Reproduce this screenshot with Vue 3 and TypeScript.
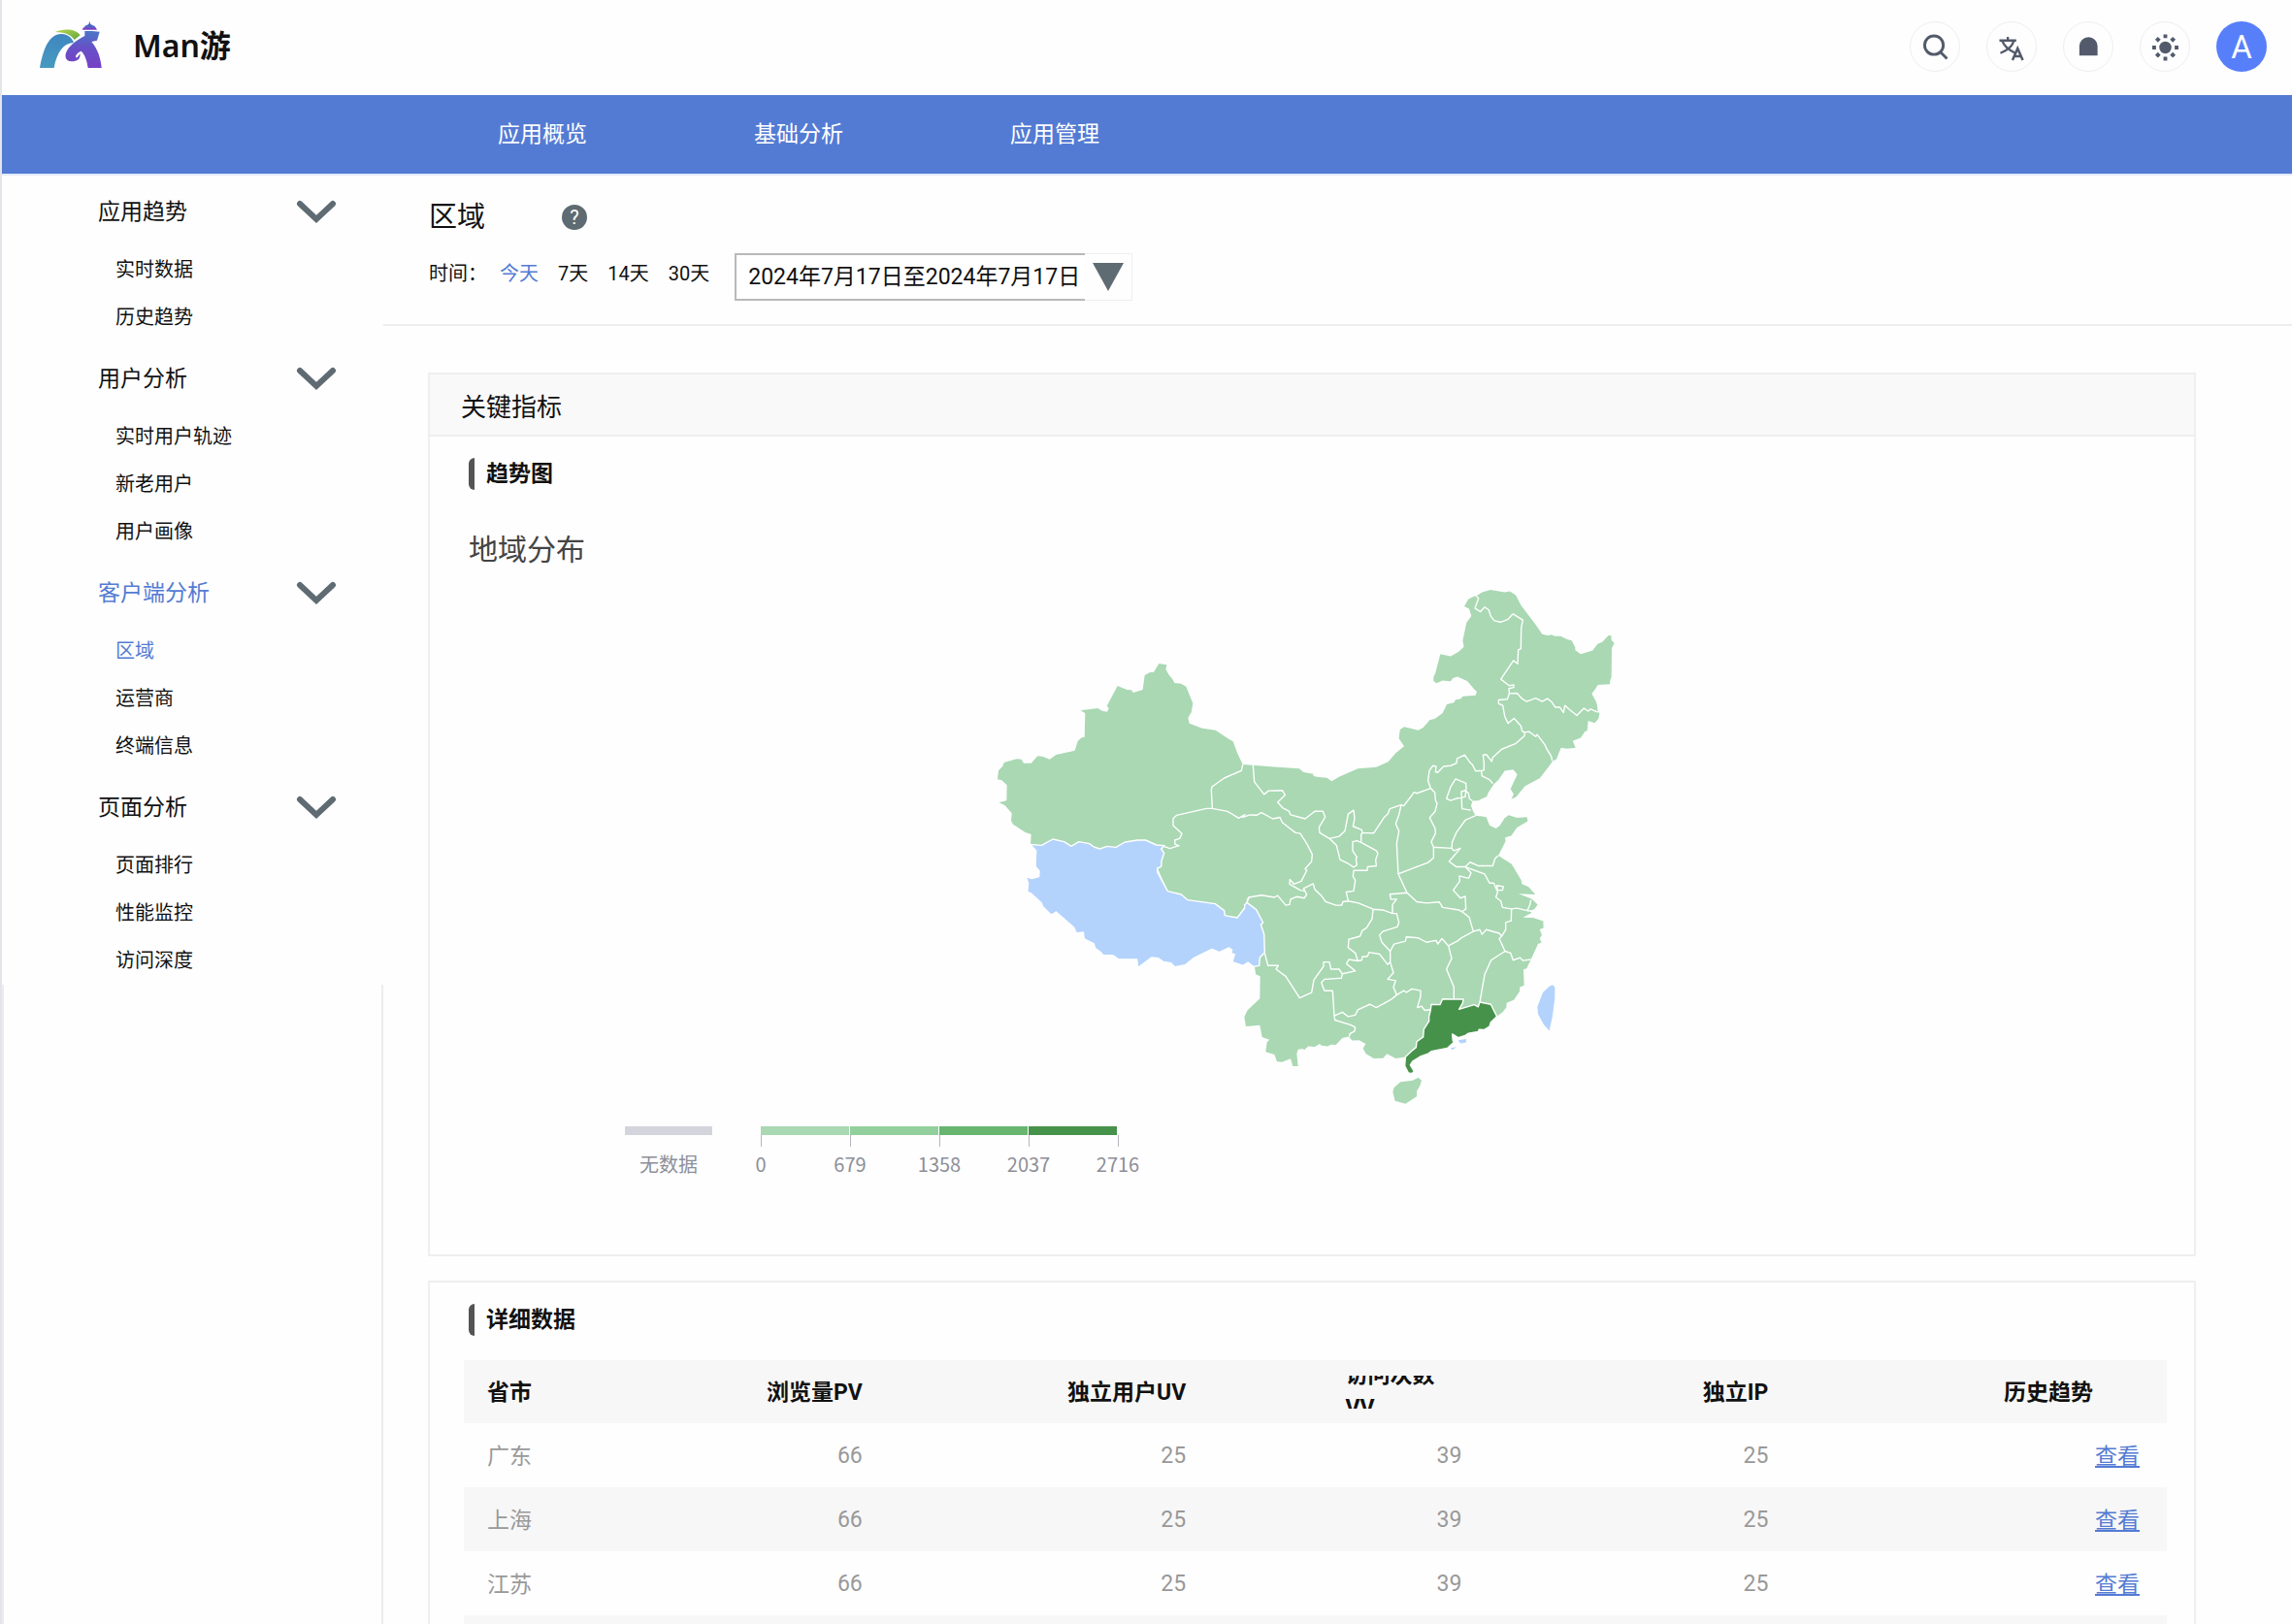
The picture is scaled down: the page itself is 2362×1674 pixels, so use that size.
<script setup lang="ts">
interface MenuGroup {
  title: string
  active?: boolean
  items: string[]
}

interface Row {
  region: string
  pv: number
  uv: number
  vv: number
  ip: number
}

const navItems: string[] = ['应用概览', '基础分析', '应用管理']

const menu: MenuGroup[] = [
  { title: '应用趋势', items: ['实时数据', '历史趋势'] },
  { title: '用户分析', items: ['实时用户轨迹', '新老用户', '用户画像'] },
  { title: '客户端分析', active: true, items: ['区域', '运营商', '终端信息'] },
  { title: '页面分析', items: ['页面排行', '性能监控', '访问深度'] },
]
const currentItem = '区域'

const ranges: string[] = ['今天', '7天', '14天', '30天']
const currentRange = '今天'

const legend = [
  { color: '#a9d8b3', from: '0' },
  { color: '#93cf9c', from: '679' },
  { color: '#67b56f', from: '1358' },
  { color: '#47924b', from: '2037' },
]

const rows: Row[] = ['广东', '上海', '江苏'].map((region) => ({ region, pv: 66, uv: 25, vv: 39, ip: 25 }))

// Land outline, western half
const westLand =
  'M782,381 765,345 752,310 735,300 698,275 657,269 617,254 613,237 623,220 628,192 607,140 592,131 571,129 565,117 553,103 544,86 547,73 523,69 507,95 494,97 479,105 473,150 443,159 438,151 424,150 395,138 362,200 368,207 363,218 347,215 334,207 281,214 295,223 293,296 284,298 272,309 263,338 205,351 185,365 165,357 148,355 128,377 105,377 98,365 83,364 44,375 40,386 27,400 24,427 37,430 53,445 52,492 45,495 28,498 47,508 68,532 66,555 72,566 110,591 128,597 126,628 200,640 530,650 520,705 550,773 612,800 697,812 725,848 765,855 795,810 840,870 844,962 833,978 833,1003 819,1006 822,1030 836,1036 835,1105 797,1141 787,1162 792,1191 835,1187 842,1224 865,1232 857,1240 853,1270 880,1278 888,1300 904,1301 930,1291 937,1314 953,1314 949,1275 953,1262 972,1260 985,1249 1000,1253 1000,410 970,405 957,394 890,389Z'

// Land outline, eastern half
const eastLand =
  'M190,582 230,594 262,597 277,606 300,594 358,571 415,567 452,552 475,528 501,509 485,487 488,463 501,455 545,464 560,457 580,436 597,432 620,416 633,392 655,387 660,379 675,377 683,370 722,367 726,357 718,350 696,327 666,315 652,319 645,328 620,326 601,333 592,327 592,316 598,304 613,252 645,258 670,245 686,231 682,215 694,164 709,146 702,126 687,119 700,99 717,91 724,90 742,80 768,73 812,80 828,77 846,88 863,117 908,170 928,197 945,200 958,198 965,202 985,202 1005,211 1019,214 1030,233 1030,241 1047,252 1084,242 1099,224 1113,219 1133,200 1141,200 1142,213 1151,222 1143,235 1142,316 1138,325 1137,336 1100,338 1090,352 1081,362 1094,384 1098,395 1100,413 1105,417 1102,432 1090,444 1070,438 1067,466 1060,468 1047,485 1022,494 1031,513 1005,516 986,513 972,545 960,551 947,567 920,598 875,620 847,650 832,656 840,643 830,628 851,587 838,574 812,577 793,602 778,615 760,640 757,649 730,660 712,661 708,675 714,690 722,702 755,706 765,729 785,738 797,730 812,709 824,701 850,708 881,706 883,718 850,735 832,758 813,763 815,773 792,814 833,837 863,882 865,893 885,900 907,922 855,920 895,934 914,950 903,963 890,967 895,973 885,978 868,986 900,987 931,996 932,1015 920,1019 927,1035 920,1045 926,1056 915,1060 893,1103 880,1128 870,1131 872,1175 859,1180 858,1192 840,1216 818,1224 817,1237 805,1250 787,1262 730,1270 600,1320 505,1375 475,1379 448,1366 436,1378 407,1379 383,1366 374,1351 382,1338 362,1328 340,1329 330,1318 310,1322 290,1341 275,1340 265,1345 245,1343 240,1338 225,1346 205,1345 192,1355 190,1355Z'

const tibet =
  'M126,628 160,631 195,612 230,620 252,634 275,620 308,626 322,636 340,642 362,634 390,637 418,621 457,615 482,615 515,630 540,632 530,642 539,655 531,680 530,697 518,702 519,715 550,773 592,783 612,800 697,812 725,833 727,848 765,855 788,825 788,815 795,808 824,830 845,870 838,877 848,905 850,962 835,978 833,1003 815,1006 798,993 783,1003 750,992 757,968 745,965 749,955 740,948 710,962 687,952 632,979 605,1001 572,1007 560,995 537,991 520,980 500,978 458,1010 455,984 397,983 382,972 350,970 343,962 326,950 322,936 292,921 289,900 268,903 260,885 205,837 190,847 163,820 160,810 128,780 116,775 119,750 112,728 130,734 152,728 153,710 141,697 143,648Z'

const guangdong =
  'M583,1243 585,1228 612,1229 620,1213 655,1214 684,1214 682,1224 671,1242 718,1229 730,1235 735,1222 769,1228 788,1262 769,1278 765,1290 748,1299 733,1298 730,1304 700,1309 690,1315 668,1321 650,1311 652,1330 656,1333 635,1350 585,1359 575,1366 550,1374 527,1387 520,1397 532,1415 525,1421 514,1419 503,1400 505,1375 527,1356 538,1348 540,1332 560,1319 562,1297 578,1275 578,1262Z'

const hainan = 'M466,1472 470,1460 490,1444 527,1440 545,1432 555,1440 550,1455 540,1470 540,1485 505,1505 473,1497Z'

const islands =
  'M950,1178 960,1174 967,1180 967,1210 960,1260 950,1302 933,1285 915,1255 913,1235 930,1195Z M668,1328 693,1325 692,1335 675,1337Z M645,1350 663,1347 650,1355Z'

const westBorders =
  'M782,381 778,400 725,423 687,450 685,460 688,517 M790,535 770,547 735,526 688,517 670,517 578,538 567,548 567,570 594,595 587,610 572,615 573,628 585,632 557,641 540,635 M795,808 802,792'

const eastBorders = [
  'M724,90 731,97 720,124 737,134 750,121 763,129 768,145 780,159 800,163 822,155 838,140 868,157 863,180 862,237 854,240 852,279 839,270 800,322 826,340 840,338 840,345 825,348 826,362',
  'M826,362 850,361 865,376 880,384 908,375 928,384 944,376 958,386 968,400 982,400 994,415 998,395 1010,405 1035,423 1057,403 1070,411 1077,405 1100,414',
  'M826,362 820,378 793,380 793,390 806,395 812,425 822,445 841,431 862,452 866,467 874,470',
  'M874,470 887,468 908,482 912,476 935,503 943,518 956,537 959,550',
  'M874,470 873,480 845,502 803,517 775,540 772,551 755,532 745,533 748,555 748,575 740,578 742,592 765,602 775,613',
  'M742,577 722,578 712,560 703,552 688,533 665,543 663,556 645,563 623,565 605,582 598,580 600,565 590,563 579,577 575,605 583,626',
  'M583,626 596,638 598,660 603,668 597,690 580,708 597,738 598,752 585,775 592,790',
  'M583,626 540,640 532,637 517,655 500,675 492,672 485,700 475,725 485,745 478,780 483,865',
  'M492,672 457,683 450,698 440,706 407,751 372,750',
  'M372,750 370,742 343,732 348,710 345,687 328,698 318,745 300,760 270,766 292,785 303,825 328,836 345,846 355,840 352,823 355,818 342,800 342,775 355,772 368,777 368,755 372,750',
  'M368,777 415,800 420,808 413,825 415,842 388,845 387,855 345,855 343,872 350,882 345,912 322,915 328,940',
  'M34,562 38,608 68,643 82,633 125,632 133,645 110,665 125,680 145,690 150,700 195,711 225,690 250,690 257,706 238,735 240,750 270,766',
  'M0,707 25,700 45,701 60,694 95,711 117,707 125,722 165,750 180,752 200,780 217,810 215,830 195,850 200,855 183,885 160,893 148,880 147,893 180,910 192,912',
  'M15,940 20,930 60,924 100,930 110,925 135,952 147,950 150,935 170,928 192,932 200,922 190,905 220,892 225,908 245,925 258,942 290,952 308,952 312,942 328,940',
  'M328,940 360,946 405,963 435,965 465,975 478,975 485,1000 480,1012 435,1025 425,1035 432,1055 458,1080',
  'M405,963 402,990 385,1015 372,1022 365,1038 330,1047 328,1070 350,1085 358,1107',
  'M358,1107 330,1103 323,1115 350,1135 310,1143 300,1130 275,1130 270,1110 252,1110 252,1122 222,1160 215,1195 178,1210 135,1150 105,1130 112,1120 80,1120 70,1085',
  'M358,1107 370,1105 372,1095 387,1095 393,1083 425,1088 450,1117 458,1110 458,1080',
  'M310,1143 307,1155 255,1158 245,1168 255,1190 280,1190 285,1260',
  'M285,1260 310,1250 328,1262 350,1258 358,1243 395,1228 415,1237 460,1215 478,1202',
  'M458,1110 468,1140 450,1158 475,1162 468,1180 478,1202 500,1190 508,1195 525,1185 552,1190 552,1205 542,1237 555,1233 565,1245 583,1243',
  'M285,1260 287,1272 335,1285 350,1292 348,1303 333,1310 332,1318',
  'M483,865 510,917 457,921 460,935 478,935 465,950 465,975',
  'M483,865 525,850 575,833 592,820 592,790 648,793 655,800 675,793 640,830 663,845 690,845',
  'M648,793 650,775 662,750 690,715 722,702',
  'M510,917 540,942 570,946 610,943 620,958 670,965 680,970',
  'M690,845 708,862 700,877 672,870 673,885 653,910 675,932 690,927 692,962 680,970 702,985 715,1025',
  'M690,845 705,832 730,842 775,842 782,822 792,814',
  'M690,845 750,865 765,890 778,890 788,910 805,910 808,900 788,897 790,915 785,930 800,940 805,958 833,962 850,960 882,967 890,950 893,937 M882,967 893,968',
  'M833,962 832,995 815,1000 815,1020 803,1038',
  'M638,1065 665,1052 680,1042 715,1025 735,1020 742,1033 755,1020 795,1030 803,1038 795,1045 813,1080 770,1105 750,1145 735,1222',
  'M458,1080 470,1060 505,1052 508,1040 545,1043 570,1055 600,1050 605,1060 618,1045 638,1065 648,1100 632,1130 655,1180 655,1212',
  'M813,1080 830,1085 838,1105 860,1098 868,1106 893,1103',
  'M632,655 645,622 660,600 692,612 693,625 690,650 660,655 645,660Z',
  'M676,636 690,632 700,640 703,655 712,661 M678,635 680,683 708,687',
].join(' ')
</script>

<template>
  <div class="app">
    <header class="topbar">
      <svg class="logo" viewBox="120 62 198 150" aria-hidden="true">
        <defs>
          <linearGradient id="peak" x1="0" y1="0" x2="0" y2="1">
            <stop offset="0" stop-color="#3f86c0" />
            <stop offset="1" stop-color="#479abf" />
          </linearGradient>
          <linearGradient id="leaf" x1="0" y1="0" x2="1" y2="1">
            <stop offset="0" stop-color="#b9d84e" />
            <stop offset="1" stop-color="#5fa63f" />
          </linearGradient>
          <linearGradient id="wall" x1="0" y1="0" x2="0" y2="1">
            <stop offset="0" stop-color="#4a77c6" />
            <stop offset="0.45" stop-color="#6750c8" />
            <stop offset="1" stop-color="#7640c6" />
          </linearGradient>
        </defs>
        <path fill="url(#peak)" d="M123 209C132 160 148 104 190 104c20 0 34 14 38 27-30 0-52 28-61 78z" />
        <path fill="url(#leaf)" d="M170 98c26-12 66-10 78 10l-18 14c-12-18-33-23-60-24z" />
        <path
          fill="url(#wall)"
          d="M262 95h22l24 2-8 27-17 4c18 20 29 52 31 81h-42c-3-22-9-40-21-52-10 4-20 13-16 20 4 2 8-5 12-13 3 17-8 25-26 25-20 0-23-20-13-35 11-17 27-30 54-44z"
        />
        <path fill="#4a66c0" d="M277 65l3 9 14 7h-34l14-7zM262 81h32v4h-32z" />
        <path fill="#7640c6" d="M258 84h38l4 7h-46z" />
      </svg>
      <h1 class="brand">Man游</h1>
      <div class="tools">
        <button class="tool" type="button" aria-label="搜索">
          <svg viewBox="0 0 52 52">
            <circle cx="25" cy="24.500" r="10" fill="none" stroke="#525a6b" stroke-width="3" />
            <path d="M32 32l7 7" stroke="#525a6b" stroke-width="3" />
          </svg>
        </button>
        <button class="tool" type="button" aria-label="语言">
          <svg viewBox="0 0 52 52" fill="none" stroke="#525a6b" stroke-width="2.400">
            <path d="M13 19.500h18M22 15.500v4M16 20c2 6 7 10 15 13.500M28.500 20c-2 6-6 10-14.500 13" />
            <path d="M27 40.500L32.500 28l5.500 12.500M29 36.500h7.500" stroke-width="2.600" />
          </svg>
        </button>
        <button class="tool" type="button" aria-label="通知">
          <svg viewBox="0 0 52 52">
            <path d="M16.500 35.500V25.500a9.500 9.500 0 0 1 19.500 0V35.500z" fill="#525a6b" />
          </svg>
        </button>
        <button class="tool" type="button" aria-label="主题">
          <svg viewBox="0 0 52 52" fill="#525a6b">
            <circle cx="26.500" cy="27" r="6.500" />
            <path
              d="M24.500 13h4v4h-4zM24.500 37h4v4h-4zM12.500 25h4v4h-4zM36.500 25h4v4h-4zM18.500 15.500l3 3-3 3-3-3zM34.500 15.500l3 3-3 3-3-3zM18.500 32l3 3-3 3-3-3zM34.500 32l3 3-3 3-3-3z"
            />
          </svg>
        </button>
        <button class="avatar" type="button">A</button>
      </div>
    </header>

    <nav class="nav">
      <a v-for="item in navItems" :key="item" href="#">{{ item }}</a>
    </nav>

    <div class="body">
      <aside class="side">
        <section v-for="group in menu" :key="group.title" class="group">
          <button type="button" class="group-title" :class="{ active: group.active }">
            <span>{{ group.title }}</span>
            <svg class="chevron" viewBox="0 0 42 26" aria-hidden="true">
              <path d="M4 5l17 16L38 5" fill="none" stroke="#5f6b72" stroke-width="6" stroke-linecap="round" />
            </svg>
          </button>
          <a
            v-for="item in group.items"
            :key="item"
            href="#"
            class="item"
            :class="{ active: item === currentItem }"
            >{{ item }}</a
          >
        </section>
        <div class="side-rest"></div>
      </aside>

      <main class="main">
        <div class="page-head">
          <div class="page-title">
            <h2>区域</h2>
            <button type="button" class="help" aria-label="帮助">?</button>
          </div>
          <div class="filters">
            <label class="time-label" for="period">时间：</label>
            <div class="ranges">
              <a v-for="r in ranges" :key="r" href="#" :class="{ active: r === currentRange }">{{ r }}</a>
            </div>
            <div class="picker">
              <select id="period">
                <option>2024年7月17日至2024年7月17日</option>
              </select>
              <span class="arrow">
                <svg viewBox="0 0 32 29" aria-hidden="true"><path d="M0 0h32L16 29z" fill="#5f6b72" /></svg>
              </span>
            </div>
          </div>
        </div>

        <section class="card">
          <h3 class="card-head">关键指标</h3>
          <div class="card-body">
            <h4 class="section-title">趋势图</h4>
            <p class="chart-title">地域分布</p>
            <svg class="map" viewBox="2 0 660 580" role="img" aria-label="地域分布">
              <g transform="translate(0 80) scale(0.33333)">
                <path class="land" :d="westLand" />
              </g>
              <g transform="translate(260 0) scale(0.33333 0.3699)">
                <path class="land" :d="eastLand" />
                <path class="land" :d="hainan" />
                <path class="nodata" :d="islands" />
                <path class="border" :d="eastBorders" />
                <path class="top" :d="guangdong" />
              </g>
              <g transform="translate(0 80) scale(0.33333)">
                <path class="nodata edge" :d="tibet" />
                <path class="border" :d="westBorders" />
              </g>
            </svg>
            <div class="legend">
              <div class="none">
                <i></i>
                <span>无数据</span>
              </div>
              <div class="scale">
                <div v-for="step in legend" :key="step.from" class="step">
                  <i :style="{ background: step.color }"></i>
                  <span>{{ step.from }}</span>
                </div>
                <div class="step end"><span>2716</span></div>
              </div>
            </div>
          </div>
        </section>

        <section class="card detail">
          <h4 class="section-title">详细数据</h4>
          <table>
            <colgroup>
              <col class="c-region" />
              <col class="c-pv" />
              <col class="c-uv" />
              <col class="c-vv" />
              <col class="c-ip" />
              <col />
            </colgroup>
            <thead>
              <tr>
                <th scope="col">省市</th>
                <th scope="col">浏览量PV</th>
                <th scope="col">独立用户UV</th>
                <th scope="col" class="visits">
                  <div class="clip"><span>访问次数<br />VV</span></div>
                </th>
                <th scope="col">独立IP</th>
                <th scope="col" class="trend">历史趋势</th>
              </tr>
            </thead>
            <tbody>
              <tr v-for="row in rows" :key="row.region">
                <td>{{ row.region }}</td>
                <td>{{ row.pv }}</td>
                <td>{{ row.uv }}</td>
                <td>{{ row.vv }}</td>
                <td>{{ row.ip }}</td>
                <td><a href="#">查看</a></td>
              </tr>
              <tr>
                <td colspan="6"></td>
              </tr>
            </tbody>
          </table>
        </section>
      </main>
    </div>
  </div>
</template>

<style>
body {
  margin: 0;
  background: #fefefe;
}
</style>

<style scoped>
.app {
  box-sizing: border-box;
  height: 100vh;
  overflow: hidden;
  display: flex;
  flex-direction: column;
  border-left: 2px solid #e4e4ea;
  color: #111;
  font-family: Roboto, 'Noto Sans CJK SC', sans-serif;
  font-size: 23px;
}
h1,
h2,
h3,
h4,
p {
  margin: 0;
  font-weight: 400;
}
a {
  color: inherit;
  text-decoration: none;
}
button {
  padding: 0;
  border: 0;
  background: none;
  color: inherit;
  font: inherit;
}

.topbar {
  flex: none;
  display: flex;
  align-items: center;
  height: 98px;
  padding: 0 26px 0 38px;
}
.logo {
  width: 66px;
  height: 50px;
  margin-bottom: 6px;
}
.brand {
  margin-left: 31px;
  margin-bottom: 8px;
  font-family: 'Noto Sans', 'Noto Sans CJK SC', sans-serif;
  font-size: 32px;
  font-weight: 600;
}
.tools {
  display: flex;
  gap: 27px;
  margin-left: auto;
  margin-bottom: 2px;
}
.tool {
  box-sizing: border-box;
  width: 52px;
  height: 52px;
  border: 1px solid #efeff3;
  border-radius: 50%;
}
.tool svg {
  display: block;
  width: 50px;
  height: 50px;
}
.avatar {
  width: 52px;
  height: 52px;
  border-radius: 50%;
  background: #587ffa;
  color: #fff;
  font-size: 33px;
}

.nav {
  flex: none;
  display: flex;
  gap: 172px;
  padding-left: 511px;
  background: #547bd3;
  color: #fff;
  line-height: 81px;
  border-bottom: 2px solid #e4ebf9;
}

.body {
  flex: 1;
  min-height: 0;
  display: flex;
}
.side {
  flex: none;
  display: flex;
  flex-direction: column;
  width: 393px;
  padding-top: 1px;
}
.side-rest {
  flex: 1;
  box-sizing: border-box;
  border: solid #ececf0;
  border-width: 0 2px;
}
.group {
  display: flex;
  flex-direction: column;
  padding-bottom: 2px;
}
.group:last-of-type {
  padding-bottom: 0;
}
.group-title {
  display: flex;
  align-items: center;
  justify-content: space-between;
  height: 72px;
  padding: 0 48px 0 99px;
  text-align: left;
}
.group-title span {
  padding-bottom: 5px;
}
.chevron {
  width: 42px;
  height: 26px;
}
.item {
  padding-left: 117px;
  font-size: 20px;
  line-height: 49px;
}
.active {
  color: #547bd3;
}

.main {
  flex: 1;
  min-width: 0;
}
.page-head {
  padding: 23px 0 24px 47px;
  border-bottom: 2px solid #eee;
}
.page-title {
  display: flex;
  align-items: center;
  height: 40px;
}
.page-title h2 {
  padding-bottom: 6px;
  font-size: 29px;
}
.help {
  width: 26px;
  height: 26px;
  margin-left: 79px;
  border-radius: 50%;
  background: #5f6b72;
  color: #fff;
  font-size: 20px;
  line-height: 26px;
}
.filters {
  display: flex;
  margin-top: 17px;
  font-size: 20px;
  line-height: 43px;
}
.time-label {
  width: 73px;
}
.ranges {
  display: flex;
  gap: 20px;
}
.picker {
  display: flex;
  margin-left: 26px;
}
.picker select {
  box-sizing: border-box;
  width: 361px;
  height: 49px;
  padding: 0 0 0 12px;
  border: 2px solid #b9b9b9;
  border-right: 0;
  border-radius: 0;
  appearance: none;
  background: #fff;
  color: #111;
  font: inherit;
  font-size: 23px;
}
.arrow {
  display: flex;
  align-items: center;
  justify-content: center;
  width: 48px;
  border: 1px solid #eee;
  border-left: 0;
}
.arrow svg {
  width: 32px;
  height: 29px;
}

.card {
  margin: 48px 99px 0 46px;
  border: 2px solid #efefef;
}
.card-head {
  padding: 6px 0 0 32px;
  border-bottom: 2px solid #efefef;
  background: #f9f9f9;
  font-size: 26px;
  line-height: 56px;
}
.card-body {
  display: flex;
  flex-direction: column;
  padding: 22px 40px 71px;
}
.section-title {
  display: flex;
  align-items: flex-start;
  gap: 12px;
  height: 33px;
  font-weight: 700;
  line-height: 33px;
}
.section-title::before {
  content: '';
  width: 6px;
  height: 33px;
  border-radius: 6px 0 0 6px;
  background: #545454;
}
.chart-title {
  margin-top: 48px;
  color: #444;
  font-size: 30px;
  line-height: 28px;
}
.map {
  align-self: center;
  width: 660px;
  height: 580px;
}
.land {
  fill: #a9d8b3;
}
.nodata {
  fill: #b3d3fc;
}
.top {
  fill: #47924b;
}
.border,
.edge,
.top {
  stroke: #fff;
  stroke-width: 1.4;
  stroke-linejoin: round;
  vector-effect: non-scaling-stroke;
}
.border {
  fill: none;
}

.legend {
  display: flex;
  gap: 50px;
  padding-left: 161px;
  color: #8d8f98;
  font-family: 'Noto Sans CJK SC', sans-serif;
  font-size: 20px;
  line-height: 38px;
}
.legend i {
  display: block;
  height: 9px;
}
.none {
  width: 90px;
  text-align: center;
}
.none i {
  margin-bottom: 11px;
  background: #d4d5dc;
}
.scale {
  display: flex;
}
.step {
  position: relative;
  width: 92px;
  height: 61px;
}
.step i {
  margin-right: 1px;
}
.step::before {
  content: '';
  position: absolute;
  top: 9px;
  left: 0;
  width: 1px;
  height: 12px;
  background: #b5b7be;
}
.step span {
  position: absolute;
  top: 20px;
  left: -46px;
  width: 92px;
  text-align: center;
}
.end {
  width: 0;
}

.detail {
  margin-top: 25px;
  padding: 22px 28px 22px 35px;
}
.detail .section-title {
  margin-left: 5px;
}
table {
  width: 100%;
  margin-top: 25px;
  border-collapse: collapse;
  table-layout: fixed;
}
.c-region {
  width: 9%;
}
.c-pv {
  width: 16%;
}
.c-uv {
  width: 19%;
}
.c-vv {
  width: 16.2%;
}
.c-ip {
  width: 18%;
}
th,
td {
  height: 66px;
  box-sizing: border-box;
  padding: 0 28px 0 0;
  text-align: right;
}
th {
  height: 65px;
  padding-bottom: 3px;
  font-weight: 700;
}
th:first-child,
td:first-child {
  padding: 0 0 3px 24px;
  text-align: left;
}
td:last-child {
  padding-bottom: 3px;
}
.visits {
  padding-bottom: 0;
}
.trend {
  padding-right: 76px;
}
td {
  color: #999;
}
thead tr,
tbody tr:nth-child(even) {
  background: #f7f7f7;
}
td a {
  color: #547bd3;
  text-decoration: underline;
}
.clip {
  display: flex;
  align-items: center;
  width: 120px;
  height: 34px;
  margin-left: auto;
  overflow: hidden;
  line-height: 34px;
  text-align: left;
}
</style>
